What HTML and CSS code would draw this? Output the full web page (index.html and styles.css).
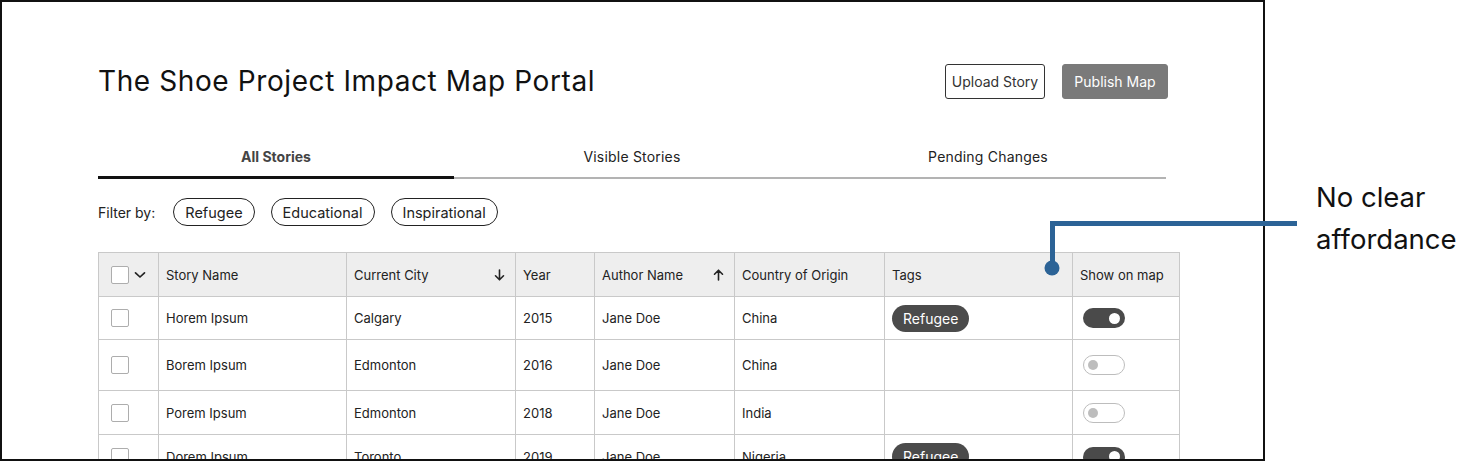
FILE: index.html
```html
<!DOCTYPE html>
<html lang="en">
<head>
<meta charset="utf-8">
<title>The Shoe Project Impact Map Portal</title>
<link rel="stylesheet" href="styles.css">
</head>
<body>
<div class="stage">
  <div class="frame">
    <header class="top">
      <h1 class="title">The Shoe Project Impact Map Portal</h1>
      <div class="actions">
        <button class="btn btn-outline">Upload Story</button>
        <button class="btn btn-filled">Publish Map</button>
      </div>
    </header>

    <nav class="tabs">
      <div class="tab active">All Stories</div>
      <div class="tab">Visible Stories</div>
      <div class="tab">Pending Changes</div>
    </nav>

    <div class="filters">
      <span class="filter-label">Filter by:</span>
      <span class="pill">Refugee</span>
      <span class="pill">Educational</span>
      <span class="pill">Inspirational</span>
    </div>

    <table class="stories">
      <colgroup>
        <col class="c-check"><col class="c-story"><col class="c-city"><col class="c-year">
        <col class="c-author"><col class="c-country"><col class="c-tags"><col class="c-map">
      </colgroup>
      <thead>
        <tr class="head-row">
          <th class="check-cell">
            <div class="check-head">
              <span class="checkbox"></span>
              <svg class="chev" width="12" height="8" viewBox="0 0 12 8"><path d="M1.5 1.8 L6 6 L10.5 1.8" fill="none" stroke="#222" stroke-width="1.7" stroke-linecap="round" stroke-linejoin="round"/></svg>
            </div>
          </th>
          <th>Story Name</th>
          <th><div class="sort-head"><span>Current City</span>
            <svg width="11" height="12" viewBox="0 0 11 12"><path d="M5.5 1 V10.5 M1.5 6.8 L5.5 10.8 L9.5 6.8" fill="none" stroke="#222" stroke-width="1.6" stroke-linecap="round" stroke-linejoin="round"/></svg></div></th>
          <th>Year</th>
          <th><div class="sort-head"><span>Author Name</span>
            <svg width="11" height="12" viewBox="0 0 11 12"><path d="M5.5 11 V1.5 M1.5 5.2 L5.5 1.2 L9.5 5.2" fill="none" stroke="#222" stroke-width="1.6" stroke-linecap="round" stroke-linejoin="round"/></svg></div></th>
          <th>Country of Origin</th>
          <th>Tags</th>
          <th>Show on map</th>
        </tr>
      </thead>
      <tbody>
        <tr class="r1">
          <td class="check-cell"><span class="checkbox"></span></td>
          <td>Horem Ipsum</td><td>Calgary</td><td>2015</td><td>Jane Doe</td><td>China</td>
          <td><span class="tag">Refugee</span></td>
          <td><span class="toggle on"><span class="knob"></span></span></td>
        </tr>
        <tr class="r2">
          <td class="check-cell"><span class="checkbox"></span></td>
          <td>Borem Ipsum</td><td>Edmonton</td><td>2016</td><td>Jane Doe</td><td>China</td>
          <td></td>
          <td><span class="toggle off"><span class="knob"></span></span></td>
        </tr>
        <tr class="r3">
          <td class="check-cell"><span class="checkbox"></span></td>
          <td>Porem Ipsum</td><td>Edmonton</td><td>2018</td><td>Jane Doe</td><td>India</td>
          <td></td>
          <td><span class="toggle off"><span class="knob"></span></span></td>
        </tr>
        <tr class="r4">
          <td class="check-cell"><span class="checkbox"></span></td>
          <td>Dorem Ipsum</td><td>Toronto</td><td>2019</td><td>Jane Doe</td><td>Nigeria</td>
          <td><span class="tag">Refugee</span></td>
          <td><span class="toggle on"><span class="knob"></span></span></td>
        </tr>
      </tbody>
    </table>
  </div>

  <div class="note">No clear<br>affordance</div>

  <svg class="callout" width="1458" height="462" viewBox="0 0 1458 462">
    <path d="M1297 223.5 H1052.5 V266" fill="none" stroke="#2C6396" stroke-width="5"/>
    <circle cx="1052" cy="268" r="7.5" fill="#2C6396"/>
  </svg>
</div>
</body>
</html>
```

FILE: styles.css
```css
* { box-sizing: border-box; }

html, body {
  margin: 0;
  padding: 0;
  background: #ffffff;
}

body {
  width: 1458px;
  height: 462px;
  overflow: hidden;
  font-family: "Inter", "Open Sans", sans-serif;
  color: #222;
}

.stage {
  position: relative;
  display: flex;
  align-items: flex-start;
  width: 1458px;
  height: 462px;
}

.frame {
  width: 1265px;
  height: 461px;
  border: 2px solid #111;
  overflow: hidden;
  padding-left: 96px;
  flex: none;
}

/* header */
.top {
  width: 1070px;
  margin-top: 62px;
  height: 35px;
  display: flex;
  align-items: center;
  justify-content: space-between;
}

.title {
  margin: 0;
  font-size: 28px;
  line-height: 35px;
  font-weight: 400;
  color: #111;
  letter-spacing: 0.6px;
}

.actions {
  display: flex;
  gap: 17px;
}

.btn {
  height: 35px;
  padding: 0;
  font-family: inherit;
  font-size: 14px;
  border-radius: 3px;
  text-align: center;
  cursor: pointer;
}

.btn-outline {
  width: 100px;
  background: #fff;
  border: 1.5px solid #333;
  color: #333;
}

.btn-filled {
  width: 106px;
  background: #7a7a7a;
  border: 1.5px solid #7a7a7a;
  color: #fff;
}

/* tabs */
.tabs {
  width: 1068px;
  margin-top: 48px;
  display: flex;
  align-items: flex-start;
  border-bottom: 2px solid #b3b3b3;
}

.tab {
  flex: 1;
  text-align: center;
  font-size: 14px;
  line-height: 20px;
  padding-bottom: 10px;
  color: #222;
  letter-spacing: 0.2px;
}

.tab.active {
  font-weight: 700;
  color: #444;
  padding-bottom: 9px;
  border-bottom: 3px solid #111;
  margin-bottom: -2px;
  letter-spacing: 0;
}

/* filters */
.filters {
  margin-top: 19px;
  height: 28px;
  display: flex;
  align-items: center;
  gap: 16px;
  font-size: 14px;
}

.filter-label {
  margin-right: 2px;
  color: #222;
}

.pill {
  height: 28px;
  padding: 0 11px;
  display: inline-flex;
  align-items: center;
  border: 1px solid #222;
  border-radius: 14px;
  color: #222;
  font-size: 14.5px;
}

/* table */
.stories {
  margin-top: 26px;
  width: 1081px;
  border-collapse: collapse;
  table-layout: fixed;
  font-size: 13px;
}

.c-check { width: 60px; }
.c-story { width: 188px; }
.c-city { width: 169px; }
.c-year { width: 79px; }
.c-author { width: 140px; }
.c-country { width: 150px; }
.c-tags { width: 188px; }
.c-map { width: 107px; }

.stories th,
.stories td {
  border: 1px solid #c9c9c9;
  padding: 0 7px;
  text-align: left;
  vertical-align: middle;
  font-weight: 400;
  color: #222;
  white-space: nowrap;
}

.stories th {
  background: #eeeeee;
}

.head-row { height: 44px; }
.r1 { height: 43px; }
.r2 { height: 51px; }
.r3 { height: 44px; }
.r4 { height: 44px; }

.stories .check-cell {
  padding-left: 12px;
}

.check-head {
  display: flex;
  align-items: center;
  gap: 5px;
}

.checkbox {
  display: block;
  width: 18px;
  height: 18px;
  border: 1.5px solid #adadad;
  border-radius: 2px;
  background: #fff;
}

.chev { display: block; }

.sort-head {
  display: flex;
  align-items: center;
  justify-content: space-between;
  padding-right: 3px;
}

.sort-head svg { display: block; }

.tag {
  display: inline-flex;
  align-items: center;
  height: 27px;
  padding: 0 11px;
  border-radius: 14px;
  background: #4b4b4b;
  color: #fff;
  font-size: 14px;
}

.toggle {
  display: flex;
  align-items: center;
  width: 42px;
  height: 20px;
  border-radius: 10px;
  margin-left: 3px;
}

.toggle.on {
  background: #4a4a4a;
  justify-content: flex-end;
  padding-right: 5px;
}

.toggle.on .knob {
  width: 11px;
  height: 11px;
  border-radius: 50%;
  background: #fff;
}

.toggle.off {
  background: #fff;
  border: 1.5px solid #bdbdbd;
  padding-left: 4px;
}

.toggle.off .knob {
  width: 10px;
  height: 10px;
  border-radius: 50%;
  background: #bdbdbd;
}

/* annotation */
.note {
  margin-left: 51px;
  margin-top: 176px;
  font-size: 27.5px;
  line-height: 42px;
  color: #111;
  white-space: nowrap;
}

.callout {
  position: absolute;
  left: 0;
  top: 0;
  pointer-events: none;
}
```
